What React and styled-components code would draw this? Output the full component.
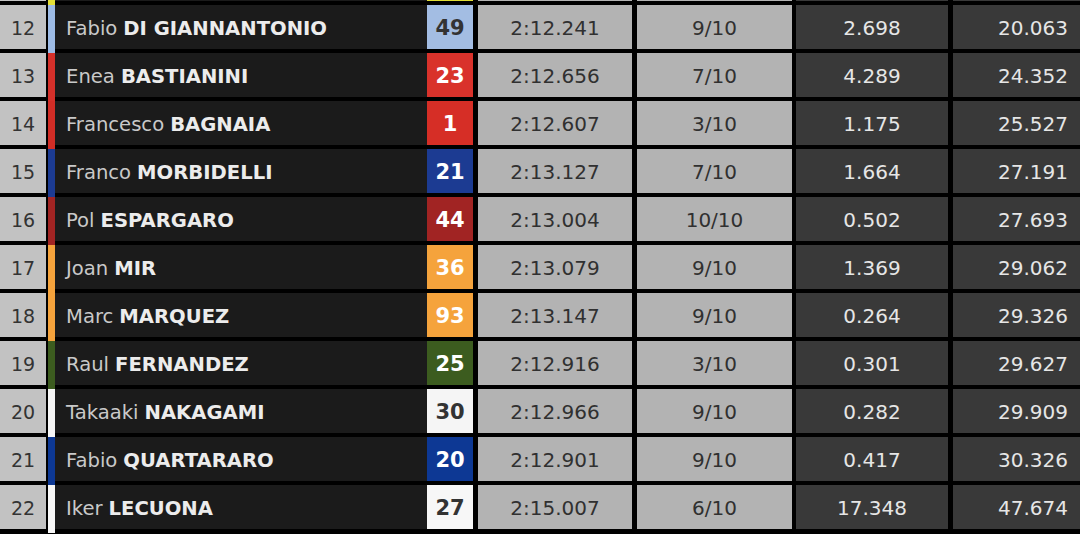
import React from "react";
import styled, { createGlobalStyle } from "styled-components";

const Global = createGlobalStyle`
  html, body { margin: 0; padding: 0; background: #000; }
  body { width: 1080px; height: 534px; overflow: hidden; font-family: "DejaVu Sans", "Liberation Sans", sans-serif; }
`;

const Table = styled.div`
  display: flex;
  flex-direction: column;
  width: 1080px;
  background: #000;
`;

const Row = styled.div`
  display: flex;
  align-items: flex-start;
  height: ${(p) => (p.$partial ? "5px" : "48px")};
`;

const Cell = styled.div`
  height: ${(p) => (p.$partial ? "1px" : "44px")};
  width: ${(p) => p.$w}px;
  margin-left: ${(p) => p.$ml || 0}px;
  padding-top: ${(p) => (p.$partial ? "0" : "2px")};
  flex: none;
  display: flex;
  align-items: center;
  overflow: hidden;
  box-sizing: border-box;
  font-size: 20px;
`;

const PosCell = styled(Cell)`
  background: #c2c2c2;
  color: #333;
  justify-content: center;
  font-size: 19px;
`;

const Stripe = styled.div`
  width: 7px;
  margin-left: 2px;
  height: ${(p) => (p.$partial ? "5px" : "48px")};
  background: ${(p) => p.$c};
  flex: none;
`;

const NameCell = styled(Cell)`
  background: #1b1b1b;
  padding-left: 11px;
  white-space: nowrap;
  font-size: 19.6px;
`;

const First = styled.span`
  color: #c9c9c9;
  margin-right: 6px;
`;

const Last = styled.span`
  color: #ececec;
  font-weight: bold;
`;

const NumBox = styled(Cell)`
  background: ${(p) => p.$bg};
  color: ${(p) => p.$fg};
  justify-content: center;
  font-weight: bold;
  font-size: 21px;
`;

const GrayCell = styled(Cell)`
  background: #b3b3b3;
  color: #303030;
  justify-content: center;
`;

const DarkCell = styled(Cell)`
  background: #393939;
  color: #e6e6e6;
  justify-content: ${(p) => (p.$right ? "flex-end" : "center")};
  padding-right: ${(p) => (p.$right ? "12px" : "0")};
`;

const rows = [
  { pos: 12, first: "Fabio", last: "DI GIANNANTONIO", num: 49, bg: "#a3bde3", fg: "#333", stripe: "#9dbbe5", time: "2:12.241", laps: "9/10", gap: "2.698", total: "20.063" },
  { pos: 13, first: "Enea", last: "BASTIANINI", num: 23, bg: "#d9322b", fg: "#fff", stripe: "#d4302a", time: "2:12.656", laps: "7/10", gap: "4.289", total: "24.352" },
  { pos: 14, first: "Francesco", last: "BAGNAIA", num: 1, bg: "#d62e26", fg: "#fff", stripe: "#d12d26", time: "2:12.607", laps: "3/10", gap: "1.175", total: "25.527" },
  { pos: 15, first: "Franco", last: "MORBIDELLI", num: 21, bg: "#1c3b92", fg: "#fff", stripe: "#1c3b92", time: "2:13.127", laps: "7/10", gap: "1.664", total: "27.191" },
  { pos: 16, first: "Pol", last: "ESPARGARO", num: 44, bg: "#a12423", fg: "#fff", stripe: "#a12423", time: "2:13.004", laps: "10/10", gap: "0.502", total: "27.693" },
  { pos: 17, first: "Joan", last: "MIR", num: 36, bg: "#f5a33c", fg: "#fff", stripe: "#f5a33c", time: "2:13.079", laps: "9/10", gap: "1.369", total: "29.062" },
  { pos: 18, first: "Marc", last: "MARQUEZ", num: 93, bg: "#f5a33c", fg: "#fff", stripe: "#f5a33c", time: "2:13.147", laps: "9/10", gap: "0.264", total: "29.326" },
  { pos: 19, first: "Raul", last: "FERNANDEZ", num: 25, bg: "#3c5c1f", fg: "#fff", stripe: "#3c5c1f", time: "2:12.916", laps: "3/10", gap: "0.301", total: "29.627" },
  { pos: 20, first: "Takaaki", last: "NAKAGAMI", num: 30, bg: "#f5f5f5", fg: "#333", stripe: "#f5f5f5", time: "2:12.966", laps: "9/10", gap: "0.282", total: "29.909" },
  { pos: 21, first: "Fabio", last: "QUARTARARO", num: 20, bg: "#0d3894", fg: "#fff", stripe: "#0d3894", time: "2:12.901", laps: "9/10", gap: "0.417", total: "30.326" },
  { pos: 22, first: "Iker", last: "LECUONA", num: 27, bg: "#f7f7f7", fg: "#333", stripe: "#f7f7f7", time: "2:15.007", laps: "6/10", gap: "17.348", total: "47.674" },
];

function RiderRow({ r, partial }) {
  return (
    <Row $partial={partial}>
      <PosCell $w={46} $partial={partial}>{!partial && r.pos}</PosCell>
      <Stripe $c={r.stripe} $partial={partial} />
      <NameCell $w={372} $partial={partial}>
        {!partial && (
          <>
            <First>{r.first}</First>
            <Last>{r.last}</Last>
          </>
        )}
      </NameCell>
      <NumBox $w={46} $bg={r.bg} $fg={r.fg} $partial={partial}>{!partial && r.num}</NumBox>
      <GrayCell $w={154} $ml={5} $partial={partial}>{!partial && r.time}</GrayCell>
      <GrayCell $w={155} $ml={5} $partial={partial}>{!partial && r.laps}</GrayCell>
      <DarkCell $w={152} $ml={4} $partial={partial}>{!partial && r.gap}</DarkCell>
      <DarkCell $w={127} $ml={5} $right $partial={partial}>{!partial && r.total}</DarkCell>
    </Row>
  );
}

export default function App() {
  const prev = { bg: "#e3df36", fg: "#333", stripe: "#e3df36" };
  return (
    <>
      <Global />
      <Table>
        <RiderRow r={prev} partial />
        {rows.map((r) => (
          <RiderRow key={r.pos} r={r} />
        ))}
      </Table>
    </>
  );
}
